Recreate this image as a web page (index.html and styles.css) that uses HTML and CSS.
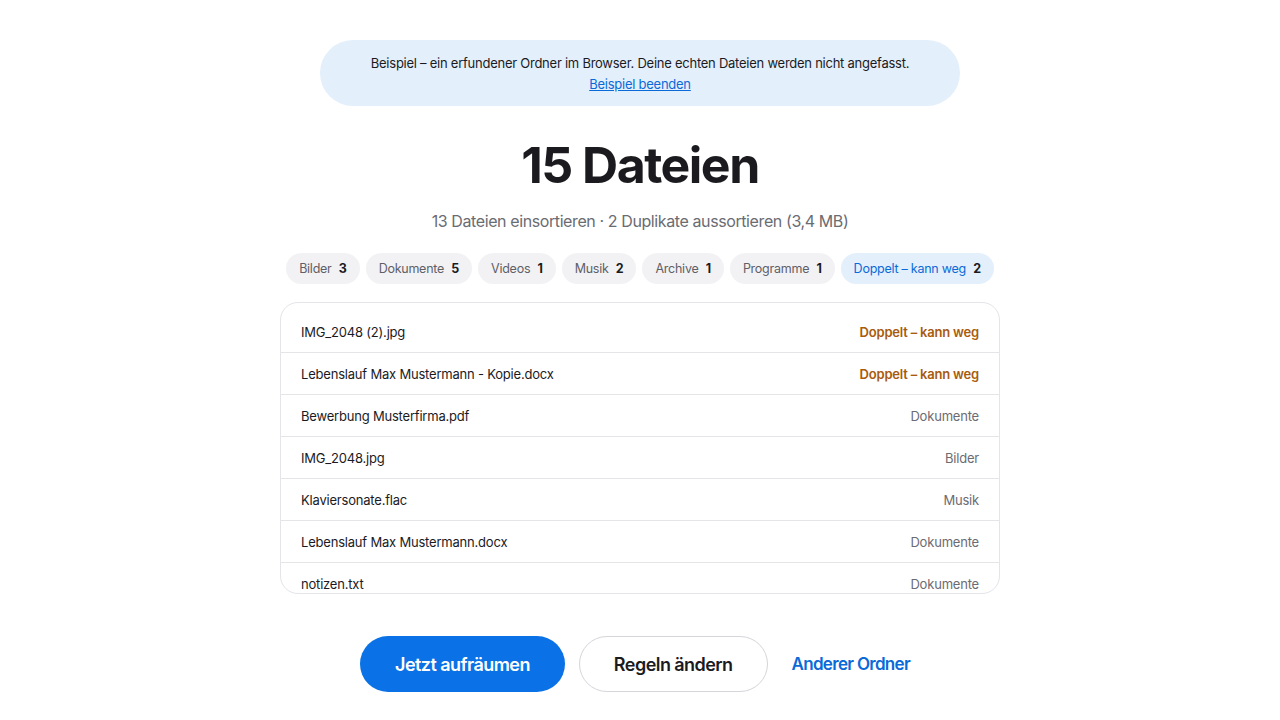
FILE: index.html
```html
<!DOCTYPE html>
<html lang="de">
<head>
    <meta charset="UTF-8">
    <title>Aufräumen - Vorschau</title>
    <link rel="stylesheet" href="styles.css">
</head>
<body>

<main class="page">
    <div class="demo-banner">
        <p>Beispiel – ein erfundener Ordner im Browser. Deine echten Dateien werden nicht angefasst.</p>
        <a href="#" class="demo-exit">Beispiel beenden</a>
    </div>

    <h1 class="title">15 Dateien</h1>
    <p class="summary">13 Dateien einsortieren · 2 Duplikate aussortieren (3,4 MB)</p>

    <div class="chips">
        <span class="chip">Bilder <b>3</b></span>
        <span class="chip">Dokumente <b>5</b></span>
        <span class="chip">Videos <b>1</b></span>
        <span class="chip">Musik <b>2</b></span>
        <span class="chip">Archive <b>1</b></span>
        <span class="chip">Programme <b>1</b></span>
        <span class="chip chip-dup">Doppelt – kann weg <b>2</b></span>
    </div>

    <ul class="file-list">
        <li><span>IMG_2048 (2).jpg</span><span class="target dup">Doppelt – kann weg</span></li>
        <li><span>Lebenslauf Max Mustermann - Kopie.docx</span><span class="target dup">Doppelt – kann weg</span></li>
        <li><span>Bewerbung Musterfirma.pdf</span><span class="target">Dokumente</span></li>
        <li><span>IMG_2048.jpg</span><span class="target">Bilder</span></li>
        <li><span>Klaviersonate.flac</span><span class="target">Musik</span></li>
        <li><span>Lebenslauf Max Mustermann.docx</span><span class="target">Dokumente</span></li>
        <li><span>notizen.txt</span><span class="target">Dokumente</span></li>
        <li><span>Rechnung_2024_03.pdf</span><span class="target">Dokumente</span></li>
        <li><span>Urlaub_Strand.jpg</span><span class="target">Bilder</span></li>
        <li><span>Urlaub_Berge.png</span><span class="target">Bilder</span></li>
        <li><span>Geburtstag.mp4</span><span class="target">Videos</span></li>
        <li><span>Podcast_Folge12.mp3</span><span class="target">Musik</span></li>
        <li><span>Fotos_Backup.zip</span><span class="target">Archive</span></li>
        <li><span>Setup_Tool.exe</span><span class="target">Programme</span></li>
        <li><span>Vertrag.docx</span><span class="target">Dokumente</span></li>
    </ul>

    <div class="actions">
        <button class="btn btn-primary">Jetzt aufräumen</button>
        <button class="btn btn-secondary">Regeln ändern</button>
        <a href="#" class="btn-link">Anderer Ordner</a>
    </div>
</main>

</body>
</html>
```

FILE: styles.css
```css
body {
    font-family: Inter, "Noto Sans", sans-serif;
    background-color: #fff;
    color: #1b1b1f;
    margin: 0;
    padding: 0;
}

.page {
    width: 720px;
    margin: 0 auto;
    padding-top: 40px;
    display: flex;
    flex-direction: column;
    align-items: center;
}

.demo-banner {
    width: 640px;
    box-sizing: border-box;
    background: #e3effb;
    border-radius: 33px;
    padding: 13px 20px 11px;
    text-align: center;
    font-size: 13px;
    line-height: 21px;
    letter-spacing: -0.25px;
}

.demo-banner p {
    margin: 0;
}

.demo-exit {
    color: #0a6ad8;
}

.title {
    font-size: 50px;
    font-weight: 700;
    letter-spacing: -1.5px;
    margin: 29px 0 0;
    line-height: 60px;
}

.summary {
    font-size: 16px;
    letter-spacing: -0.4px;
    color: #6b6b72;
    margin: 16px 0 0;
}

.chips {
    display: flex;
    gap: 6px;
    margin-top: 22px;
}

.chip {
    flex-shrink: 0;
    white-space: nowrap;
    background: #f2f2f5;
    border-radius: 16px;
    padding: 0 13px;
    height: 31px;
    line-height: 31px;
    font-size: 12.5px;
    letter-spacing: -0.25px;
    color: #5f5f66;
}

.chip b {
    color: #1b1b1f;
    margin-left: 4px;
}

.chip-dup {
    background: #e3effb;
    color: #0a6ad8;
}

.file-list {
    list-style: none;
    margin: 18px 0 0;
    padding: 8px 0 0;
    width: 720px;
    height: 292px;
    box-sizing: border-box;
    overflow: hidden;
    border: 1px solid #e4e4e9;
    border-radius: 18px;
}

.file-list li {
    display: flex;
    justify-content: space-between;
    align-items: center;
    height: 41px;
    padding: 0 20px;
    border-bottom: 1px solid #e4e4e9;
    font-size: 13px;
    letter-spacing: -0.2px;
}

.target {
    color: #6b6b72;
}

.target.dup {
    color: #a85b0e;
    font-weight: 600;
}

.actions {
    display: flex;
    align-items: center;
    gap: 14px;
    margin-top: 42px;
}

.btn {
    font-family: inherit;
    font-size: 18px;
    font-weight: 600;
    letter-spacing: -0.55px;
    height: 56px;
    border-radius: 28px;
    padding: 0 35px;
    cursor: pointer;
}

.btn-primary {
    background: #0a72e6;
    border: none;
    color: #fff;
}

.btn-secondary {
    background: #fff;
    border: 1px solid #d5d5da;
    color: #1b1b1f;
    padding: 0 34px;
}

.btn-link {
    color: #0a6ad8;
    font-size: 17px;
    font-weight: 600;
    letter-spacing: -0.7px;
    text-decoration: none;
    padding: 0 10px;
}
```
